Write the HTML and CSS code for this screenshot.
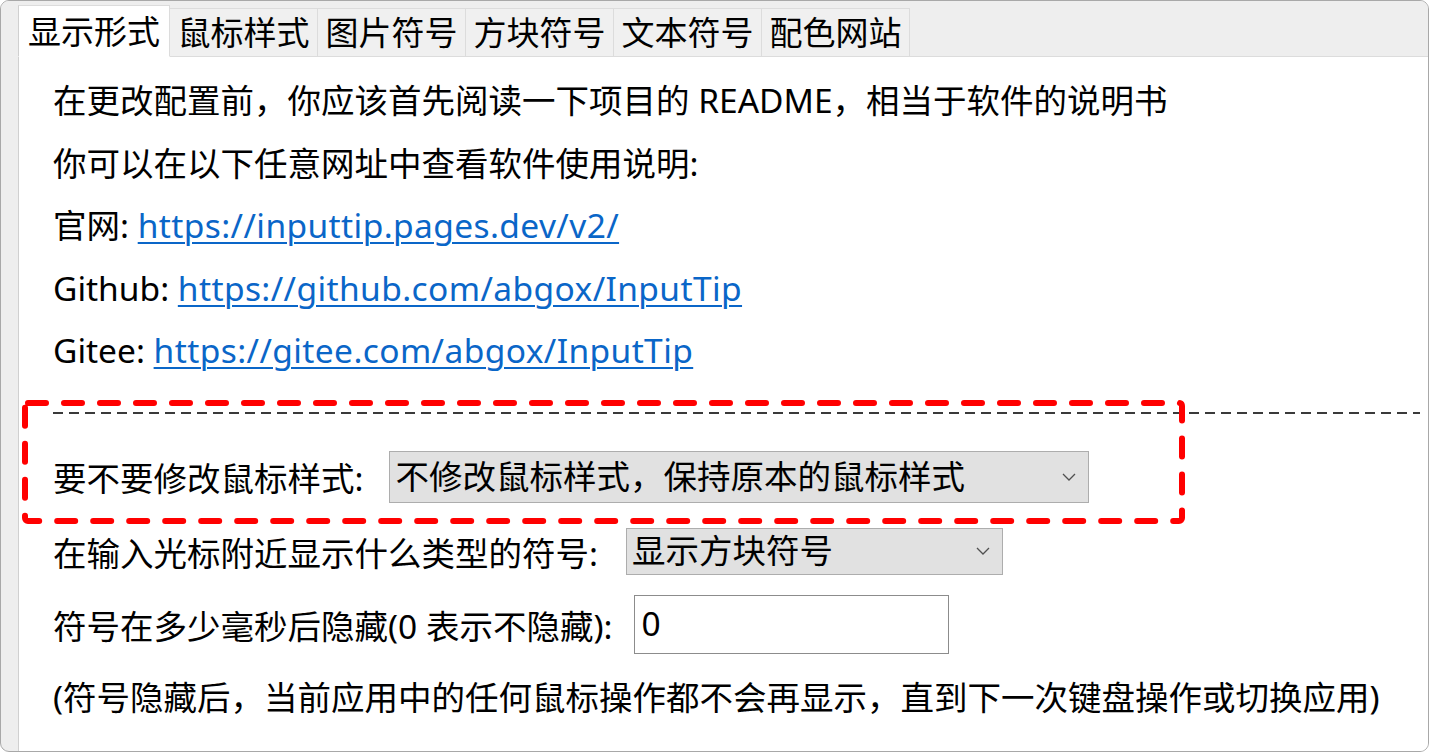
FILE: index.html
```html
<!DOCTYPE html>
<html lang="zh-CN">
<head>
<meta charset="utf-8">
<title>InputTip 设置</title>
<link rel="stylesheet" href="styles.css">
</head>
<body>
<div class="window">
  <div class="tabbar">
    <div class="tab active">显示形式</div>
    <div class="tab">鼠标样式</div>
    <div class="tab">图片符号</div>
    <div class="tab">方块符号</div>
    <div class="tab">文本符号</div>
    <div class="tab">配色网站</div>
    <div class="tab-fill"></div>
  </div>
  <div class="page">
    <div class="line">在更改配置前，你应该首先阅读一下项目的 README，相当于软件的说明书</div>
    <div class="line">你可以在以下任意网址中查看软件使用说明:</div>
    <div class="line">官网: <a class="link" href="#">https://inputtip.pages.dev/v2/</a></div>
    <div class="line">Github: <a class="link" href="#">https://github.com/abgox/InputTip</a></div>
    <div class="line">Gitee: <a class="link" href="#">https://gitee.com/abgox/InputTip</a></div>
    <div class="sep"></div>
    <div class="row row-cursor">
      <span class="label">要不要修改鼠标样式:</span>
      <div class="select select-wide">
        <span class="select-text">不修改鼠标样式，保持原本的鼠标样式</span>
        <svg class="chev" width="14" height="8" viewBox="0 0 14 8"><path d="M1 1 L7 7 L13 1" fill="none" stroke="#505050" stroke-width="1.3"/></svg>
      </div>
    </div>
    <div class="row row-symbol">
      <span class="label">在输入光标附近显示什么类型的符号:</span>
      <div class="select select-narrow">
        <span class="select-text">显示方块符号</span>
        <svg class="chev" width="14" height="8" viewBox="0 0 14 8"><path d="M1 1 L7 7 L13 1" fill="none" stroke="#505050" stroke-width="1.3"/></svg>
      </div>
    </div>
    <div class="row row-hide">
      <span class="label">符号在多少毫秒后隐藏(0 表示不隐藏):</span>
      <div class="input">0</div>
    </div>
    <div class="line note">(符号隐藏后，当前应用中的任何鼠标操作都不会再显示，直到下一次键盘操作或切换应用)</div>
  </div>
  <svg class="highlight" width="1163" height="124" viewBox="0 0 1163 124">
    <rect x="3" y="3" width="1157" height="118" rx="3" fill="none" stroke="#ff0000" stroke-width="6" stroke-dasharray="18 18" stroke-linecap="round"/>
  </svg>
</div>
</body>
</html>
```
FILE: styles.css
```css
* { box-sizing: border-box; }
html, body { margin: 0; padding: 0; background: #ffffff; }
body {
  font-family: "Noto Sans", "Noto Sans CJK SC", sans-serif;
  font-size: 33.5px;
  color: #000;
}
.window {
  position: relative;
  width: 1429px;
  height: 752px;
  border: 1px solid #a8a8a8;
  border-radius: 9px;
  overflow: hidden;
  background: #eeeeee;
  display: flex;
  flex-direction: column;
}
.tabbar {
  display: flex;
  align-items: flex-end;
  height: 56px;
  padding-left: 17px;
  background: #eeeeee;
  flex: none;
}
.tab {
  height: 49px;
  width: 148px;
  border: 1px solid #dcdcdc;
  border-left: none;
  background: #f0f0f0;
  display: flex;
  align-items: center;
  justify-content: center;
  line-height: 1;
  white-space: nowrap;
  font-size: 33px;
}
.tab.active {
  height: 52px;
  width: 152px;
  background: #ffffff;
  border-left: 1px solid #d0d0d0;
  border-bottom: 1px solid #ffffff;
  border-right: 1px solid #dcdcdc;
  justify-content: flex-start;
  padding-left: 9px;
}
.tab-fill {
  flex: 1;
  align-self: stretch;
  border-bottom: 1px solid #dcdcdc;
}
.page {
  flex: 1;
  margin-left: 17px;
  background: #ffffff;
  border-left: 1px solid #d0d0d0;
  padding: 12px 0 0 34px;
}
.line {
  height: 62.5px;
  line-height: 62.5px;
  white-space: nowrap;
}
.link {
  color: #0a66c8;
  text-decoration: underline;
  text-decoration-thickness: 2px;
  text-underline-offset: 4px;
  letter-spacing: 0.4px;
}
.sep {
  margin-top: 30px;
  margin-right: 8px;
  height: 2px;
  background: repeating-linear-gradient(to right, #3a3a3a 0 10px, transparent 10px 16px);
}
.row {
  display: flex;
  align-items: center;
  white-space: nowrap;
}
.row-cursor { margin-top: 37px; height: 52px; }
.row-symbol { margin-top: 25px; height: 47px; }
.row-hide { margin-top: 20px; height: 59px; }
.note { margin-top: 12px; }
.select {
  display: flex;
  align-items: center;
  justify-content: space-between;
  height: 100%;
  background: #e1e1e1;
  border: 1px solid #adadad;
  padding: 0 12px 0 5px;
}
.select-wide { width: 700px; margin-left: 26px; }
.select-narrow { width: 377px; margin-left: 28px; }
.select-text { line-height: 1; }
.chev { flex: none; }
.input {
  width: 315px;
  height: 100%;
  margin-left: 22px;
  border: 1px solid #8c8c8c;
  background: #ffffff;
  padding-left: 6px;
  display: flex;
  align-items: center;
  line-height: 1;
}
.highlight {
  position: absolute;
  left: 21px;
  top: 399px;
}
```
